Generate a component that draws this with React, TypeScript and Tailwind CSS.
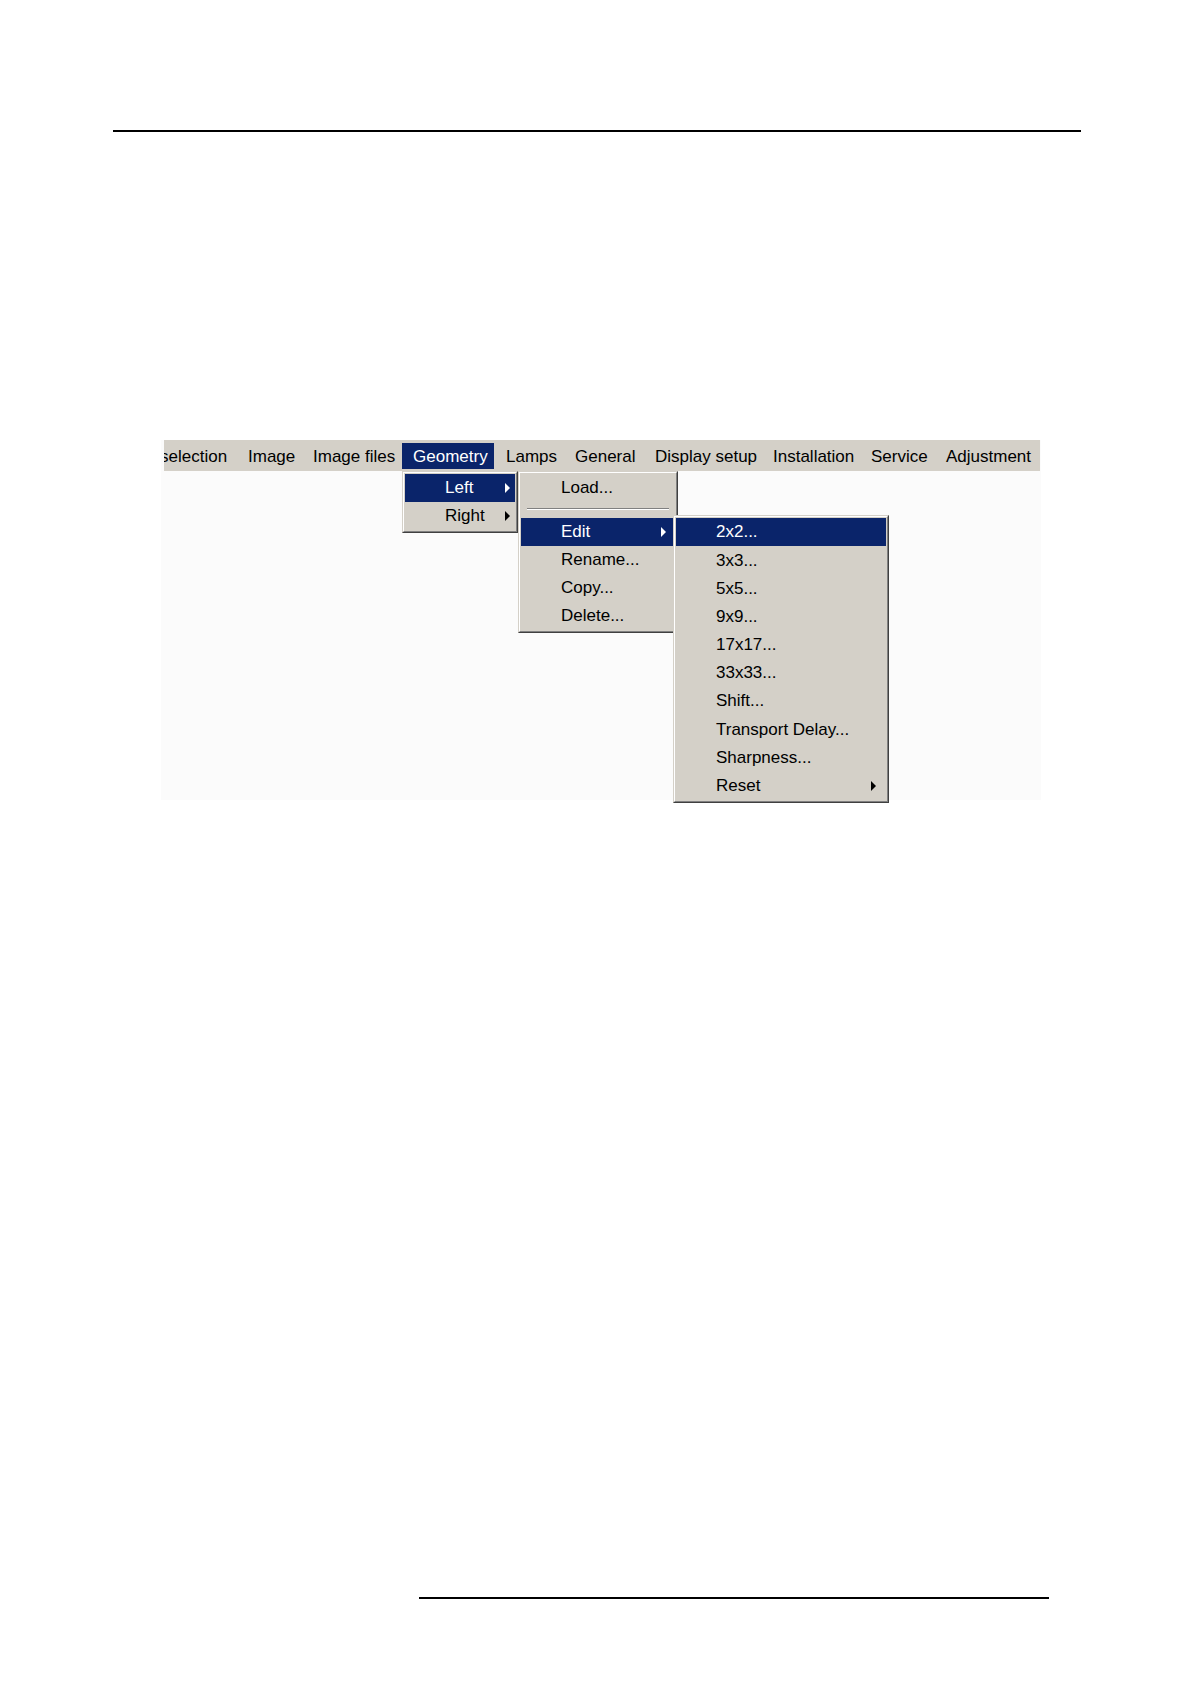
import React from "react";

const Arrow = ({ color }: { color: string }) => (
  <svg width="5" height="10" viewBox="0 0 5 10" className="shrink-0">
    <path d="M0 0 L5 5 L0 10 Z" fill={color} />
  </svg>
);

const MenuFrame = ({ className, children }: { className: string; children: React.ReactNode }) => (
  <div className={"absolute border border-[#404040] border-t-[#d4d0c8] border-l-[#d4d0c8] bg-[#d4d0c8] " + className}>
    <div className="border border-[#808080] border-t-white border-l-white p-[1px]">{children}</div>
  </div>
);

type RowProps = {
  label: string;
  active?: boolean;
  arrow?: boolean;
  h: string;
  pr: string;
};

const Row = ({ label, active, arrow, h, pr }: RowProps) => (
  <div
    className={
      "flex items-center pl-[40px] " +
      h +
      " " +
      pr +
      " " +
      (active ? "bg-[#0a246a] text-white" : "text-black")
    }
  >
    <span className="whitespace-nowrap">{label}</span>
    {arrow && (
      <span className="ml-auto flex">
        <Arrow color={active ? "#ffffff" : "#000000"} />
      </span>
    )}
  </div>
);

export default function App() {
  const bar: { label: string; w: string; pl: string; active?: boolean }[] = [
    { label: "selection", w: "w-[75px]", pl: "pl-0 -ml-[4px]" },
    { label: "Image", w: "w-[65px]", pl: "pl-[9px]" },
    { label: "Image files", w: "w-[98px]", pl: "pl-[9px]" },
    { label: "Geometry", w: "w-[95px]", pl: "pl-[11px]", active: true },
    { label: "Lamps", w: "w-[69px]", pl: "pl-[9px]" },
    { label: "General", w: "w-[80px]", pl: "pl-[9px]" },
    { label: "Display setup", w: "w-[118px]", pl: "pl-[9px]" },
    { label: "Installation", w: "w-[98px]", pl: "pl-[9px]" },
    { label: "Service", w: "w-[75px]", pl: "pl-[9px]" },
    { label: "Adjustment", w: "w-[102px]", pl: "pl-[9px]" },
  ];

  const third = [
    "2x2...",
    "3x3...",
    "5x5...",
    "9x9...",
    "17x17...",
    "33x33...",
    "Shift...",
    "Transport Delay...",
    "Sharpness...",
    "Reset",
  ];

  return (
    <div className="w-[1190px] h-[1684px] bg-white font-['Liberation_Sans',Arial,sans-serif] text-[17px] text-black overflow-hidden">
      <div className="pt-[130px] pl-[113px]">
        <div className="w-[968px] h-[2px] bg-black" />
      </div>

      <div className="mt-[308px] ml-[161px] w-[880px] h-[360px] bg-[#fbfbfb] relative">
        <div className="ml-[3px] w-[876px] h-[31px] bg-[#d4d0c8] flex items-center overflow-hidden">
          {bar.map((b) => (
            <div key={b.label} className={"shrink-0 h-[31px] flex items-center " + b.w}>
              {b.active ? (
                <div className="h-[26px] w-[92px] bg-[#0a246a] text-white flex items-center pl-[11px] pt-[2px] whitespace-nowrap">
                  {b.label}
                </div>
              ) : (
                <div className={"whitespace-nowrap pt-[3px] " + b.pl}>{b.label}</div>
              )}
            </div>
          ))}
        </div>

        {/* Geometry dropdown */}
        <MenuFrame className="left-[241px] top-[31px] w-[116px]">
          <Row label="Left" active arrow h="h-[28px]" pr="pr-[5px]" />
          <Row label="Right" arrow h="h-[28px]" pr="pr-[5px]" />
        </MenuFrame>

        {/* Left submenu */}
        <MenuFrame className="left-[357px] top-[31px] w-[160px]">
          <Row label="Load..." h="h-[28px]" pr="pr-[9px]" />
          <div className="h-[16px] pt-[6px] px-[6px]">
            <div className="h-[1px] bg-[#808080]" />
            <div className="h-[1px] bg-white" />
          </div>
          <Row label="Edit" active arrow h="h-[28px]" pr="pr-[9px]" />
          <Row label="Rename..." h="h-[28px]" pr="pr-[9px]" />
          <Row label="Copy..." h="h-[28px]" pr="pr-[9px]" />
          <Row label="Delete..." h="h-[28px]" pr="pr-[9px]" />
        </MenuFrame>

        {/* Edit submenu */}
        <MenuFrame className="left-[512px] top-[75px] w-[216px]">
          {third.map((t, i) => (
            <Row
              key={t}
              label={t}
              active={i === 0}
              arrow={t === "Reset"}
              h="h-[28.2px]"
              pr="pr-[10px]"
            />
          ))}
        </MenuFrame>
      </div>

      <div className="mt-[797px] ml-[419px] w-[630px] h-[2px] bg-black" />
    </div>
  );
}
